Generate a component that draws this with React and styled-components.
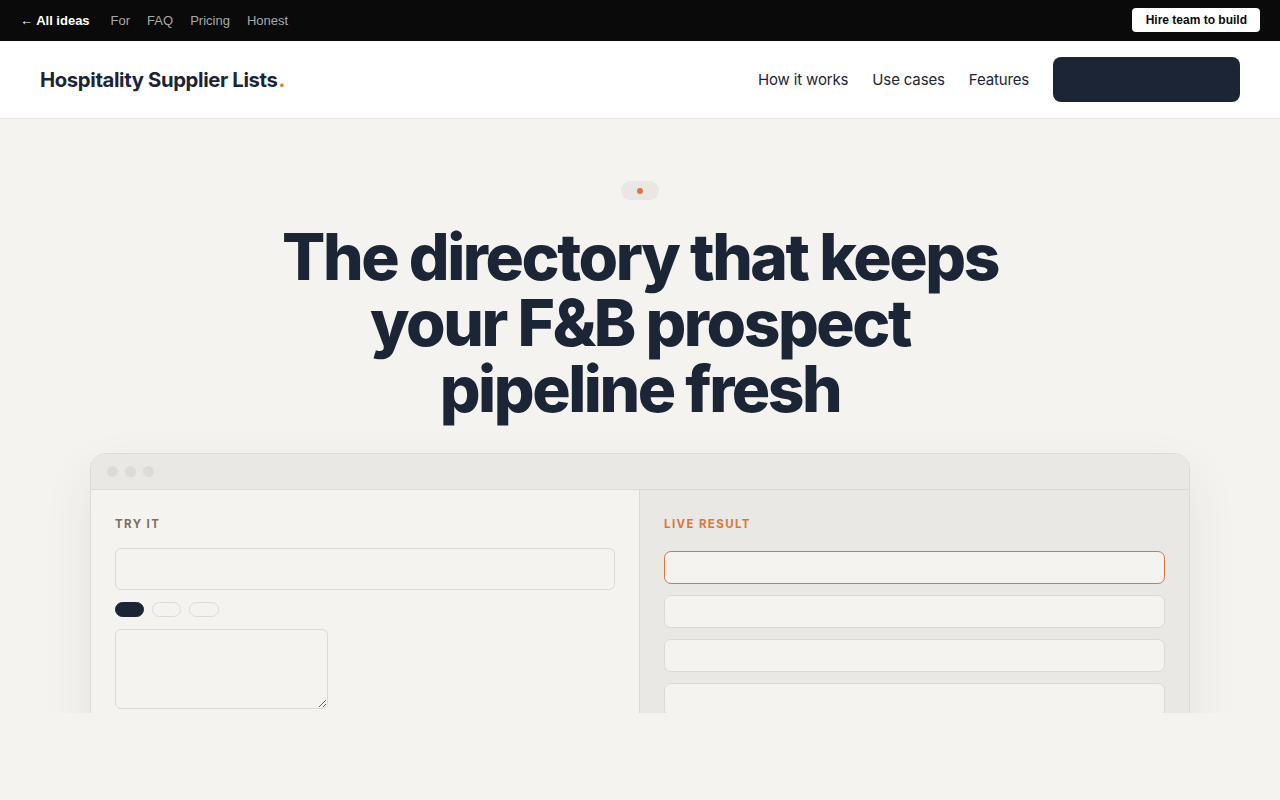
import React from "react";
import styled, { createGlobalStyle } from "styled-components";

const GlobalStyle = createGlobalStyle`
  html, body {
    margin: 0;
    padding: 0;
    background: #f4f3f0;
  }
  * {
    box-sizing: border-box;
  }
`;

const ink = "#1c2536";
const accent = "#d9773c";
const line = "#dcdad5";

const TopBar = styled.div`
  height: 41px;
  background: #0a0a0a;
  display: flex;
  align-items: center;
  justify-content: space-between;
  padding: 0 20px 1px;
  font-family: "Liberation Sans", Arial, sans-serif;
  font-size: 13px;
`;

const TopLinks = styled.div`
  display: flex;
  align-items: center;
  gap: 17px;
`;

const TopLink = styled.a`
  color: ${(p) => (p.$strong ? "#fff" : "#a8a8a8")};
  font-weight: ${(p) => (p.$strong ? 700 : 400)};
  margin-right: ${(p) => (p.$strong ? "4px" : "0")};
  text-decoration: none;
`;

const HireButton = styled.button`
  background: #fff;
  color: #0a0a0a;
  border: none;
  border-radius: 4px;
  height: 24px;
  padding: 0 13px 0 14px;
  font-family: "Liberation Sans", Arial, sans-serif;
  font-weight: 700;
  font-size: 12px;
`;

const Nav = styled.header`
  height: 78px;
  background: #fff;
  border-bottom: 1px solid #e6e4df;
  display: flex;
  align-items: center;
  justify-content: space-between;
  padding: 0 40px;
  font-family: Inter, "Noto Sans", sans-serif;
`;

const Logo = styled.div`
  font-size: 20.3px;
  font-weight: 700;
  letter-spacing: -0.018em;
  color: ${ink};
  span {
    color: ${accent};
    margin-left: 1px;
  }
`;

const NavLinks = styled.nav`
  display: flex;
  align-items: center;
  gap: 24px;
`;

const NavLink = styled.a`
  font-size: 15px;
  color: ${ink};
  letter-spacing: -0.01em;
  text-decoration: none;
`;

const CtaButton = styled.button`
  width: 187px;
  height: 45px;
  background: ${ink};
  border: none;
  border-radius: 8px;
`;

const Hero = styled.section`
  height: 594px;
  overflow: hidden;
  display: flex;
  flex-direction: column;
  align-items: center;
  padding-top: 62px;
  font-family: Inter, "Noto Sans", sans-serif;

  & > * {
    flex-shrink: 0;
  }
`;

const Badge = styled.div`
  width: 38px;
  height: 19px;
  border-radius: 10px;
  background: #e9e7e3;
  display: flex;
  align-items: center;
  justify-content: center;
  &::after {
    content: "";
    width: 6px;
    height: 6px;
    border-radius: 50%;
    background: ${accent};
  }
`;

const Headline = styled.h1`
  margin: 24px 0 0;
  width: 760px;
  text-align: center;
  font-size: 64px;
  line-height: 66px;
  font-weight: 800;
  letter-spacing: -0.038em;
  color: ${ink};
`;

const Window = styled.div`
  margin-top: 31px;
  width: 1100px;
  border: 1px solid ${line};
  border-radius: 16px;
  overflow: hidden;
  background: #f4f3f0;
  box-shadow: 0 20px 50px rgba(60, 50, 30, 0.08);
`;

const TitleBar = styled.div`
  height: 36px;
  background: #e9e8e4;
  border-bottom: 1px solid ${line};
  display: flex;
  align-items: center;
  gap: 7px;
  padding-left: 16px;
`;

const Dot = styled.span`
  width: 11px;
  height: 11px;
  border-radius: 50%;
  background: #dcdbd8;
`;

const Panes = styled.div`
  display: grid;
  grid-template-columns: 548px 1fr;
  height: 320px;
`;

const Pane = styled.div`
  padding: 27px 24px;
  background: ${(p) => (p.$shade ? "#eae8e4" : "#f4f3f0")};
  border-left: ${(p) => (p.$shade ? `1px solid ${line}` : "none")};
`;

const Label = styled.div`
  font-size: 11.5px;
  font-weight: 700;
  letter-spacing: 0.12em;
  color: ${(p) => (p.$accent ? accent : "#7b6f63")};
  margin-bottom: 17px;
`;

const Field = styled.div`
  height: 42px;
  border: 1px solid ${line};
  border-radius: 6px;
  background: #f4f3f0;
`;

const Chips = styled.div`
  display: flex;
  gap: 8px;
  margin: 12px 0;
`;

const Chip = styled.span`
  width: ${(p) => (p.$wide ? "30px" : "29px")};
  height: 15px;
  border-radius: 8px;
  background: ${(p) => (p.$on ? ink : "transparent")};
  border: 1px solid ${(p) => (p.$on ? ink : line)};
`;

const Notes = styled.textarea`
  display: block;
  width: 213px;
  height: 80px;
  border: 1px solid ${line};
  border-radius: 6px;
  background: #f4f3f0;
  outline: none;
`;

const Results = styled.div`
  display: flex;
  flex-direction: column;
  gap: 11px;
  margin-top: 20px;
`;

const ResultRow = styled.div`
  height: 33px;
  border-radius: 7px;
  background: #f4f3f0;
  border: 1px solid ${(p) => (p.$active ? accent : line)};
`;

export default function App() {
  return (
    <>
      <GlobalStyle />
      <TopBar>
        <TopLinks>
          <TopLink $strong href="#">← All ideas</TopLink>
          <TopLink href="#">For</TopLink>
          <TopLink href="#">FAQ</TopLink>
          <TopLink href="#">Pricing</TopLink>
          <TopLink href="#">Honest</TopLink>
        </TopLinks>
        <HireButton>Hire team to build</HireButton>
      </TopBar>

      <Nav>
        <Logo>
          Hospitality Supplier Lists<span>.</span>
        </Logo>
        <NavLinks>
          <NavLink href="#">How it works</NavLink>
          <NavLink href="#">Use cases</NavLink>
          <NavLink href="#">Features</NavLink>
          <CtaButton aria-label="Get started" />
        </NavLinks>
      </Nav>

      <Hero>
        <Badge />
        <Headline>The directory that keeps your F&amp;B prospect pipeline fresh</Headline>
        <Window>
          <TitleBar>
            <Dot />
            <Dot />
            <Dot />
          </TitleBar>
          <Panes>
            <Pane>
              <Label>TRY IT</Label>
              <Field />
              <Chips>
                <Chip $on />
                <Chip />
                <Chip $wide />
              </Chips>
              <Notes />
            </Pane>
            <Pane $shade>
              <Label $accent>LIVE RESULT</Label>
              <Results>
                <ResultRow $active />
                <ResultRow />
                <ResultRow />
                <ResultRow />
              </Results>
            </Pane>
          </Panes>
        </Window>
      </Hero>
    </>
  );
}
